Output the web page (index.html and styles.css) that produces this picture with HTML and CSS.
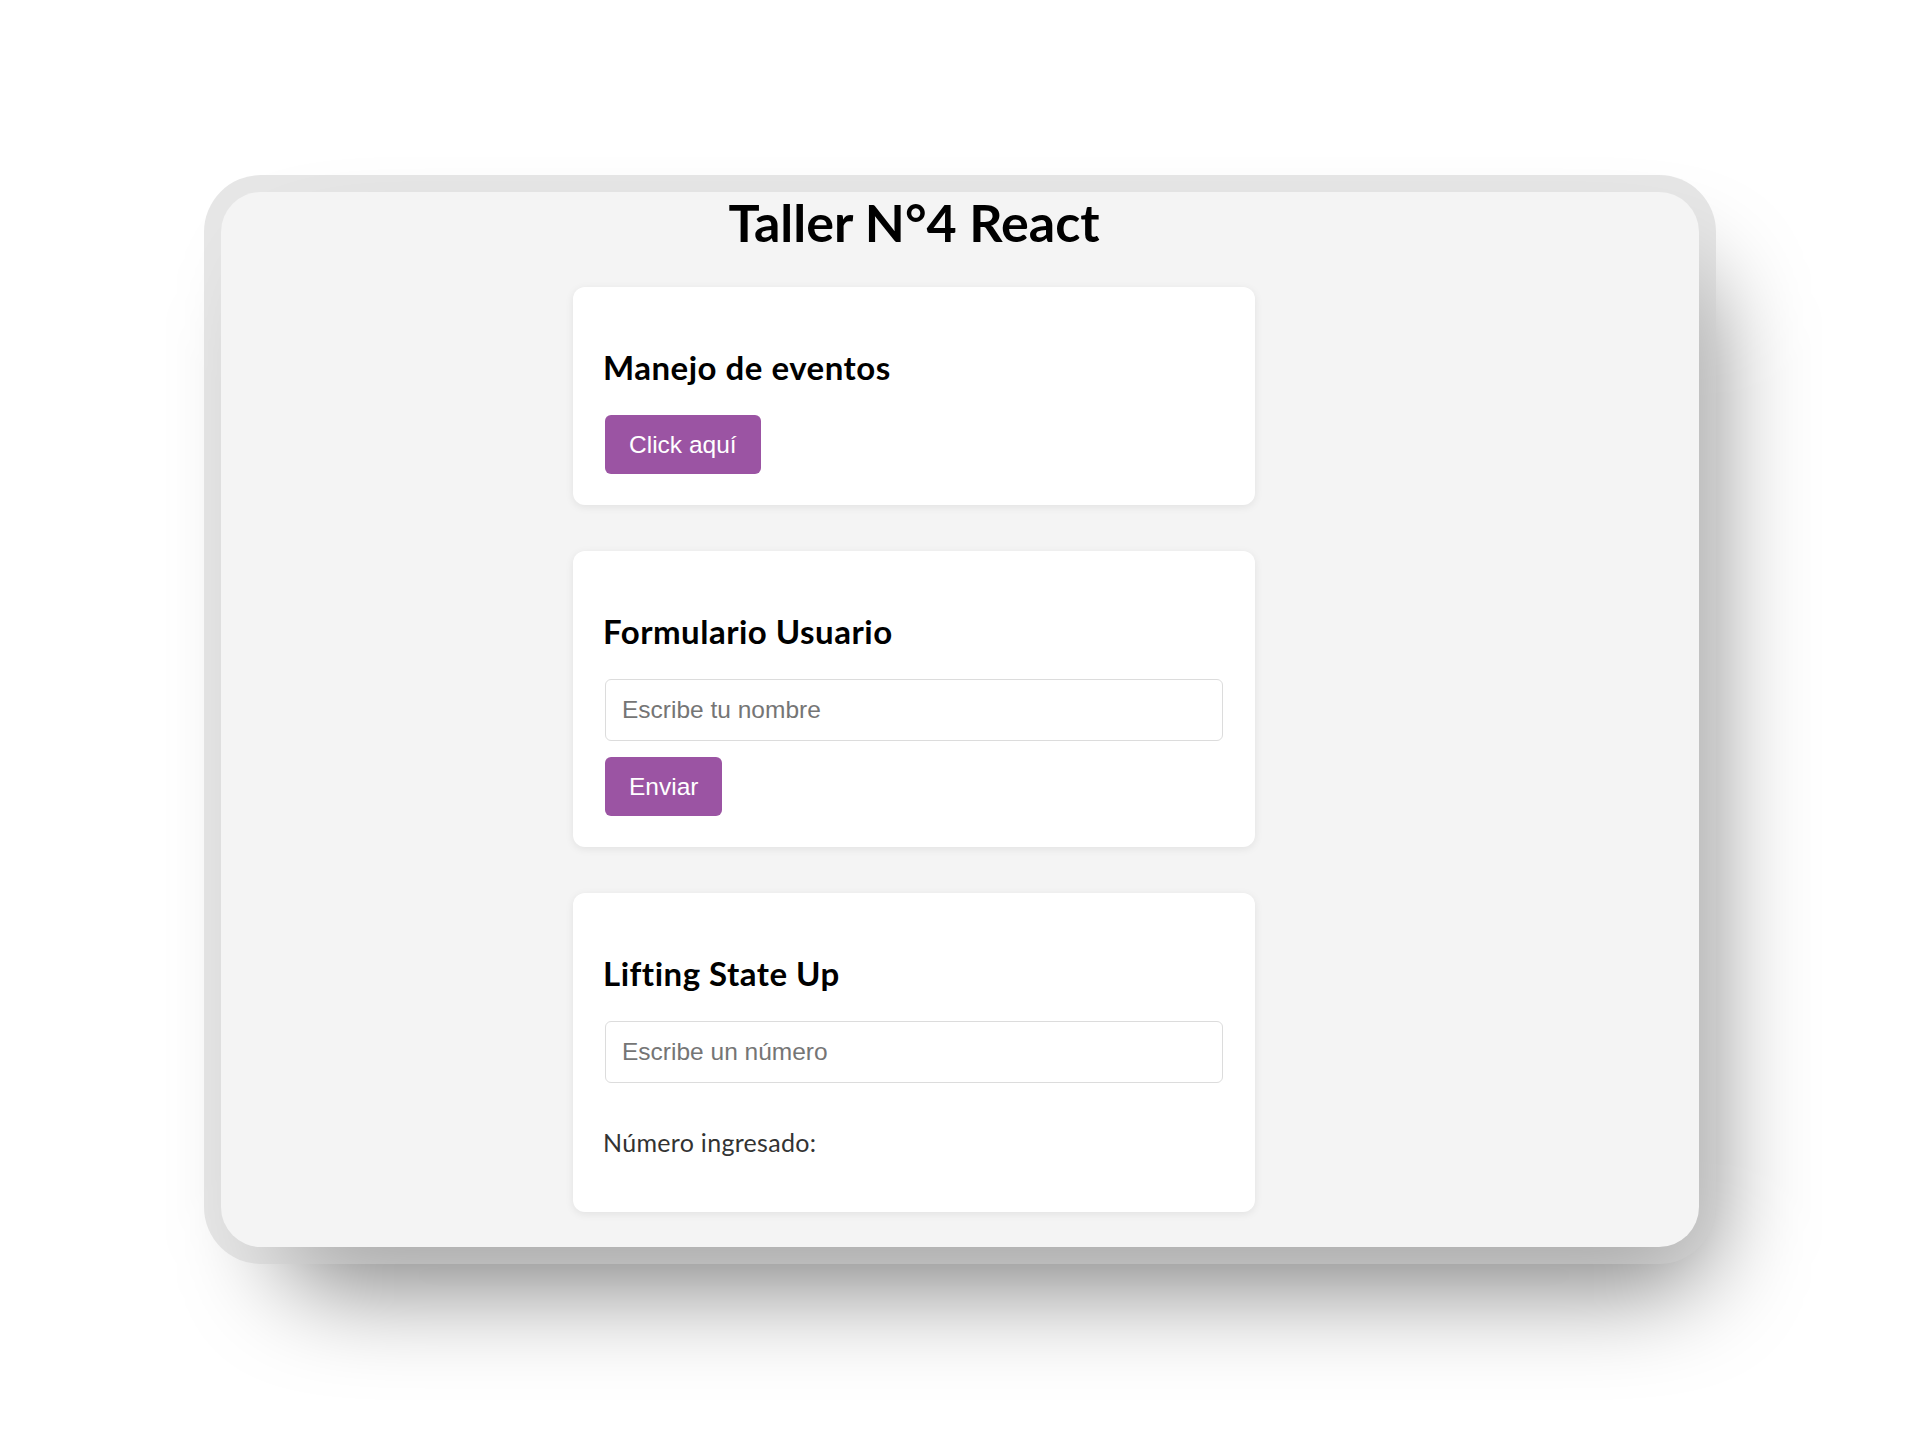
FILE: index.html
```html
<!DOCTYPE html>
<html lang="es">
<head>
<meta charset="utf-8">
<title>Taller N°4 React</title>
<link rel="stylesheet" href="styles.css">
</head>
<body>
  <div class="frame">
    <div class="screen">
      <h1 class="title">Taller N°4 React</h1>
      <div class="cards">
        <section class="card">
          <h2 class="card-title">Manejo de eventos</h2>
          <button class="btn" type="button">Click aquí</button>
        </section>
        <section class="card">
          <h2 class="card-title">Formulario Usuario</h2>
          <form class="form">
            <input class="field" type="text" placeholder="Escribe tu nombre">
            <button class="btn" type="button">Enviar</button>
          </form>
        </section>
        <section class="card">
          <h2 class="card-title">Lifting State Up</h2>
          <input class="field" type="text" placeholder="Escribe un número">
          <p class="result">Número ingresado: </p>
        </section>
      </div>
    </div>
  </div>
</body>
</html>
```
FILE: styles.css
```css
html {
  margin: 0;
  padding: 0;
  background: #ffffff;
}

body {
  margin: 0;
  padding: 175px 0 0;
  min-height: 1440px;
  box-sizing: border-box;
  font-family: "Lato", "Open Sans", sans-serif;
}

.frame {
  position: relative;
  width: 1512px;
  height: 1089px;
  margin: 0 auto;
  padding: 17px;
  box-sizing: border-box;
  border-radius: 57px;
  background: rgba(205, 205, 205, 0.5);
}

.frame::before {
  content: "";
  position: absolute;
  top: 96px;
  right: 8px;
  bottom: -22px;
  left: 76px;
  border-radius: 56px;
  background: rgba(0, 0, 0, 0.5);
  filter: blur(50px);
  z-index: -1;
}

.screen {
  height: 100%;
  border-radius: 40px;
  background: #f4f4f4;
  overflow: hidden;
  display: flex;
  flex-direction: column;
  align-items: center;
  padding-right: 92px;
  box-sizing: border-box;
}

.title {
  margin: 0;
  font-family: "Lato", "Open Sans", sans-serif;
  font-weight: 700;
  font-size: 52px;
  line-height: 60px;
  color: #000;
}

.cards {
  margin-top: 35px;
  width: 682px;
  display: flex;
  flex-direction: column;
  gap: 46px;
}

.card {
  background: #ffffff;
  border-radius: 12px;
  box-shadow: 0 2px 8px rgba(0, 0, 0, 0.08);
  padding: 32px 32px 31px;
  display: flex;
  flex-direction: column;
  align-items: flex-start;
}

.card-title {
  margin: 28px 0 28px -2px;
  font-family: "Lato", "Open Sans", sans-serif;
  font-weight: 700;
  font-size: 33px;
  letter-spacing: 0.5px;
  line-height: 40px;
  color: #000;
}

.form {
  width: 100%;
  display: flex;
  flex-direction: column;
  align-items: flex-start;
  gap: 16px;
}

.btn {
  height: 59px;
  padding: 0 24px;
  border: none;
  border-radius: 6px;
  background: #9b54a3;
  color: #ffffff;
  font-family: "Liberation Sans", Arial, sans-serif;
  font-size: 24.5px;
  cursor: pointer;
}

.field {
  width: 100%;
  height: 62px;
  box-sizing: border-box;
  padding: 0 16px;
  border: 1px solid #dcdcdc;
  border-radius: 6px;
  background: #fff;
  font-family: "Liberation Sans", Arial, sans-serif;
  font-size: 24.5px;
  color: #222;
}

.field::placeholder {
  color: #757575;
}

.result {
  margin: 44px 0 24px -2px;
  font-family: "Lato", "Open Sans", sans-serif;
  font-size: 25px;
  letter-spacing: 0.3px;
  line-height: 30px;
  color: #333;
}
```
